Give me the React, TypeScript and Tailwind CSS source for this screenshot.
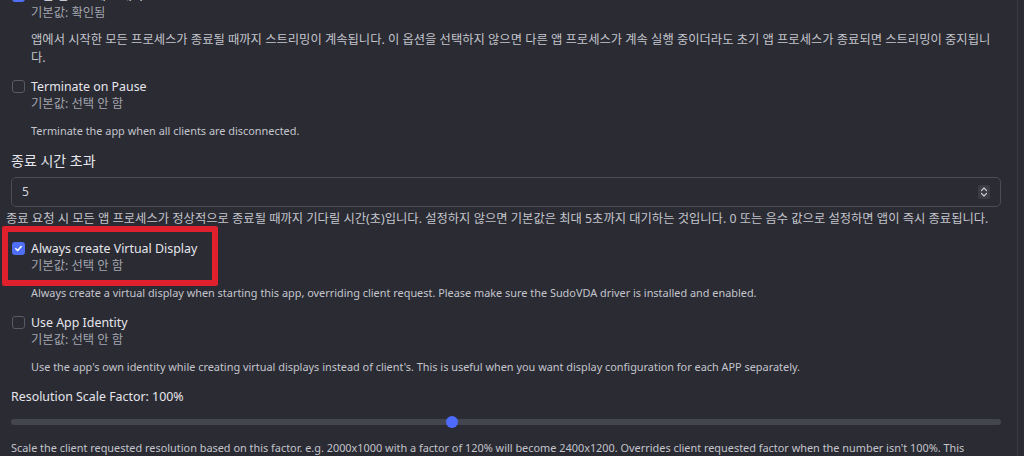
import React from "react";

const FONT = { fontFamily: '"Noto Sans", "Noto Sans CJK KR", sans-serif' };

function Checkbox({ checked }: { checked: boolean }) {
  if (checked) {
    return (
      <div className="mt-[2px] flex h-[13px] w-[13px] shrink-0 items-center justify-center rounded-[3px] bg-[#4d6ef5]">
        <svg width="9" height="9" viewBox="0 0 10 10">
          <path d="M2 5.2 L4.1 7.2 L8 2.8" fill="none" stroke="white" strokeWidth="1.7" strokeLinecap="round" strokeLinejoin="round" />
        </svg>
      </div>
    );
  }
  return <div className="mt-[2px] h-[13px] w-[13px] shrink-0 rounded-[3px] border border-[#585a64] bg-[#2a2b33]" />;
}

function CheckItem({
  label,
  def,
  desc,
  checked,
  korean = false,
  className = "",
}: {
  label: string;
  def: string;
  desc: React.ReactNode;
  checked: boolean;
  korean?: boolean;
  className?: string;
}) {
  return (
    <div className={className}>
      <div className="flex items-start gap-[6px] pl-[12px]">
        <Checkbox checked={checked} />
        <div className="flex flex-col">
          <span className="text-[12.4px] leading-[17px] text-[#e6e6ec]">{label}</span>
          <span className="text-[12.3px] leading-[18px] text-[#a4a5ae]">{def}</span>
        </div>
      </div>
      <div
        className={
          korean
            ? "mt-[9px] pl-[31px] pr-[26px] text-[12.3px] leading-[18px] text-[#c4c5cc]"
            : "mt-[9px] pl-[31px] pr-[26px] text-[10.9px] leading-[18px] text-[#c4c5cc]"
        }
      >
        {desc}
      </div>
    </div>
  );
}

export default function App() {
  return (
    <div style={FONT} className="relative h-[456px] w-[1024px] overflow-hidden bg-[#2a2b33]">
      <div className="w-[1018px] border-r border-[#3a3b44]">
        <CheckItem
          className="-mt-[13px]"
          checked
          korean
          label="모든 앱 프로세스 대기"
          def="기본값: 확인됨"
          desc="앱에서 시작한 모든 프로세스가 종료될 때까지 스트리밍이 계속됩니다. 이 옵션을 선택하지 않으면 다른 앱 프로세스가 계속 실행 중이더라도 초기 앱 프로세스가 종료되면 스트리밍이 중지됩니다."
        />
        <CheckItem
          className="mt-[11px]"
          checked={false}
          label="Terminate on Pause"
          def="기본값: 선택 안 함"
          desc="Terminate the app when all clients are disconnected."
        />
        <div className="mt-[11px] pl-[11px] text-[14px] leading-[20px] text-[#e6e6ec]">종료 시간 초과</div>
        <div className="mt-[6px] ml-[11px] mr-[16px] flex h-[30px] items-center justify-between rounded-[5px] border border-[#4a4c56] pl-[10px] pr-[10px]">
          <span className="text-[12px] text-[#d4d5dc]">5</span>
          <svg width="12" height="14" viewBox="0 0 12 14">
            <rect x="0" y="0" width="12" height="14" rx="2" fill="#3a3b45" />
            <path d="M3.5 5.5 L6 3 L8.5 5.5 M3.5 8.5 L6 11 L8.5 8.5" fill="none" stroke="#c8c9d0" strokeWidth="1.2" strokeLinecap="round" strokeLinejoin="round" />
          </svg>
        </div>
        <div className="mt-[3px] pl-[6px] text-[12.3px] leading-[18px] text-[#c4c5cc]">
          종료 요청 시 모든 앱 프로세스가 정상적으로 종료될 때까지 기다릴 시간(초)입니다. 설정하지 않으면 기본값은 최대 5초까지 대기하는 것입니다. 0 또는 음수 값으로 설정하면 앱이 즉시 종료됩니다.
        </div>
        <CheckItem
          className="mt-[12px]"
          checked
          label="Always create Virtual Display"
          def="기본값: 선택 안 함"
          desc="Always create a virtual display when starting this app, overriding client request. Please make sure the SudoVDA driver is installed and enabled."
        />
        <CheckItem
          className="mt-[12px]"
          checked={false}
          label="Use App Identity"
          def="기본값: 선택 안 함"
          desc="Use the app's own identity while creating virtual displays instead of client's. This is useful when you want display configuration for each APP separately."
        />
        <div className="mt-[11px] pl-[11px] text-[12.4px] leading-[20px] text-[#e6e6ec]">Resolution Scale Factor: 100%</div>
        <div className="relative mt-[12px] ml-[11px] mr-[16px] h-[6px] rounded-full bg-[#44464f]">
          <div className="absolute left-[435px] top-[-3px] h-[12px] w-[12px] rounded-full bg-[#4f6bff]" />
        </div>
        <div className="mt-[14px] pl-[11px] pr-[20px] text-[10.9px] leading-[18px] text-[#c4c5cc]">
          Scale the client requested resolution based on this factor. e.g. 2000x1000 with a factor of 120% will become 2400x1200. Overrides client requested factor when the number isn't 100%. This option won't affect client requested streaming resolution.
        </div>
      </div>
      <div className="pointer-events-none absolute left-[2px] top-[226px] h-[60px] w-[216px] rounded-[2px] border-[6px] border-[#e0202c]" />
    </div>
  );
}
